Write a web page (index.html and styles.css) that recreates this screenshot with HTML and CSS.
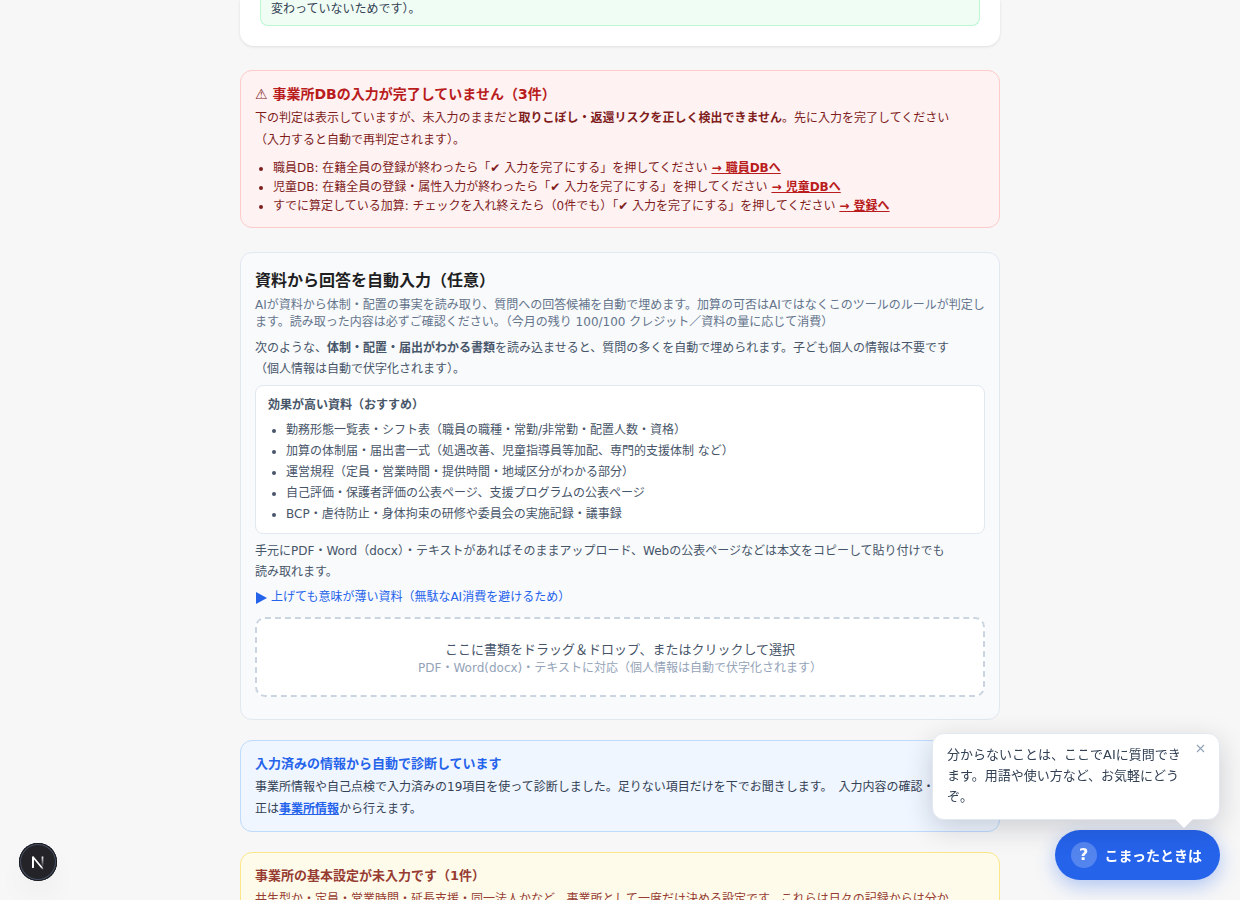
FILE: index.html
```html
<!DOCTYPE html>
<html lang="ja">
<head>
<meta charset="utf-8">
<meta name="viewport" content="width=device-width, initial-scale=1">
<title>加算診断</title>
<link rel="stylesheet" href="styles.css">
</head>
<body>
<main class="page">
  <section class="sheet">
    <p class="sheet-note">変わっていないためです）。</p>
  </section>

  <section class="card card-danger">
    <h2 class="danger-title"><span class="danger-icon">⚠</span> 事業所DBの入力が完了していません（3件）</h2>
    <p class="text">下の判定は表示していますが、未入力のままだと<strong>取りこぼし・返還リスクを正しく検出できません</strong>。先に入力を完了してください<br>（入力すると自動で再判定されます）。</p>
    <ul class="danger-list">
      <li>職員DB: 在籍全員の登録が終わったら「✔ 入力を完了にする」を押してください <a href="#staff">→ 職員DBへ</a></li>
      <li>児童DB: 在籍全員の登録・属性入力が終わったら「✔ 入力を完了にする」を押してください <a href="#children">→ 児童DBへ</a></li>
      <li>すでに算定している加算: チェックを入れ終えたら（0件でも）「✔ 入力を完了にする」を押してください <a href="#register">→ 登録へ</a></li>
    </ul>
  </section>

  <section class="card card-import">
    <h2 class="import-title">資料から回答を自動入力（任意）</h2>
    <p class="import-note">AIが資料から体制・配置の事実を読み取り、質問への回答候補を自動で埋めます。加算の可否はAIではなくこのツールのルールが判定します。読み取った内容は必ずご確認ください。（今月の残り 100/100 クレジット／資料の量に応じて消費）</p>
    <p class="import-text">次のような、<strong>体制・配置・届出がわかる書類</strong>を読み込ませると、質問の多くを自動で埋められます。子ども個人の情報は不要です<br>（個人情報は自動で伏字化されます）。</p>
    <div class="docs">
      <h3 class="docs-title">効果が高い資料（おすすめ）</h3>
      <ul class="docs-list">
        <li>勤務形態一覧表・シフト表（職員の職種・常勤/非常勤・配置人数・資格）</li>
        <li>加算の体制届・届出書一式（処遇改善、児童指導員等加配、専門的支援体制 など）</li>
        <li>運営規程（定員・営業時間・提供時間・地域区分がわかる部分）</li>
        <li>自己評価・保護者評価の公表ページ、支援プログラムの公表ページ</li>
        <li>BCP・虐待防止・身体拘束の研修や委員会の実施記録・議事録</li>
      </ul>
    </div>
    <p class="import-text">手元にPDF・Word（docx）・テキストがあればそのままアップロード、Webの公表ページなどは本文をコピーして貼り付けでも<br>読み取れます。</p>
    <details class="more">
      <summary>上げても意味が薄い資料（無駄なAI消費を避けるため）</summary>
    </details>
    <button type="button" class="dropzone">
      <span class="drop-title">ここに書類をドラッグ＆ドロップ、またはクリックして選択</span>
      <span class="drop-note">PDF・Word(docx)・テキストに対応（個人情報は自動で伏字化されます）</span>
    </button>
  </section>

  <section class="card card-info">
    <h2 class="box-title">入力済みの情報から自動で診断しています</h2>
    <p class="text">事業所情報や自己点検で入力済みの19項目を使って診断しました。足りない項目だけを下でお聞きします。　入力内容の確認・修<br>正は<a href="#office">事業所情報</a>から行えます。</p>
  </section>

  <section class="card card-warn">
    <h2 class="box-title">事業所の基本設定が未入力です（1件）</h2>
    <p class="text">共生型か・定員・営業時間・延長支援・同一法人かなど、事業所として一度だけ決める設定です。これらは日々の記録からは分か</p>
  </section>
</main>

<button type="button" class="dev-badge" aria-label="Next.js">
  <svg width="38" height="38" viewBox="0 0 38 38" aria-hidden="true">
    <defs>
      <linearGradient id="diag" x1="18" y1="19" x2="25" y2="27" gradientUnits="userSpaceOnUse">
        <stop offset="0" stop-color="#fff"/><stop offset=".6" stop-color="#fff"/><stop offset="1" stop-color="#fff" stop-opacity="0"/>
      </linearGradient>
      <linearGradient id="stem" x1="23" y1="13" x2="23" y2="24" gradientUnits="userSpaceOnUse">
        <stop offset="0" stop-color="#fff"/><stop offset="1" stop-color="#fff" stop-opacity="0"/>
      </linearGradient>
    </defs>
    <path d="M14 24.500V14L24 26" fill="none" stroke="url(#diag)" stroke-width="1.700" stroke-linejoin="bevel"/>
    <path d="M13.900 25V13.500" stroke="#fff" stroke-width="1.700"/>
    <path d="M23.500 13.500V24" stroke="url(#stem)" stroke-width="1.700"/>
  </svg>
</button>

<div class="help">
  <div class="bubble" role="status">
    <p class="bubble-text">分からないことは、ここでAIに質問できます。用語や使い方など、お気軽にどうぞ。</p>
    <button type="button" class="bubble-close" aria-label="閉じる">
      <svg width="9" height="9" viewBox="0 0 9 9" aria-hidden="true"><path d="M1 1l7 7M8 1L1 8" stroke="currentColor" stroke-width="1.200"/></svg>
    </button>
  </div>
  <button type="button" class="help-button"><span class="help-mark">?</span>こまったときは</button>
</div>
</body>
</html>
```
FILE: styles.css
```css
* { box-sizing: border-box; }

body {
  margin: 0;
  background: #f7f7f7;
  color: #1f2937;
  font-family: "DejaVu Sans", "Noto Sans CJK JP", sans-serif;
  font-size: 12px;
}

h2, h3, p, ul { margin: 0; }
ul { padding-left: 18px; }
button { font-family: inherit; cursor: pointer; }

.page {
  display: flow-root;
  max-width: 760px;
  height: 100vh;
  margin: 0 auto;
  overflow: clip;
  overflow-clip-margin: 4px;
}

.sheet {
  margin-bottom: 24px;
  padding: 0 20px 20px;
  border-radius: 0 0 14px 14px;
  background: #fff;
  box-shadow: 0 1px 3px rgba(0, 0, 0, .1);
}

.sheet-note {
  padding: 0 10px 7px;
  border: 1px solid #bbf7d0;
  border-top: 0;
  border-radius: 0 0 8px 8px;
  background: #f0fdf4;
  color: #334155;
  line-height: 18px;
}

.card {
  margin-bottom: 20px;
  padding: 12px 14px 11px;
  border: 1px solid;
  border-radius: 12px;
}

.text {
  margin-top: 1px;
  line-height: 22px;
}

.card-danger {
  margin-bottom: 24px;
  border-color: #fecaca;
  background: #fef2f2;
  color: #7f1d1d;
}

.danger-title {
  color: #b91c1c;
  font-size: 14px;
  line-height: 23px;
}

.danger-icon { color: #7f1d1d; }

.danger-list {
  margin-top: 8px;
  line-height: 19px;
}

.danger-list a {
  color: #b91c1c;
  font-weight: 700;
}

.card-import {
  padding: 15px 14px 22px;
  border-color: #e2e8f0;
  background: #f8fafc;
  color: #475569;
}

.import-title {
  color: #1f1f23;
  font-size: 16px;
  line-height: 26px;
}

.import-note {
  margin: 3px 0 7px;
  color: #64748b;
  line-height: 17px;
}

.import-text { line-height: 21px; }

.docs {
  margin: 5px 0 7px;
  padding: 9px 12px 8px;
  border: 1px solid #e2e8f0;
  border-radius: 8px;
  background: #fff;
  line-height: 21px;
}

.docs-title {
  margin-bottom: 4px;
  font-size: 12px;
}

.more {
  margin: 4px 0 9px;
  color: #2563eb;
  line-height: 21px;
}

.more summary {
  display: flex;
  align-items: center;
  gap: 4px;
  cursor: pointer;
}

.more summary::before {
  content: "";
  margin-left: 1px;
  border: 6px solid transparent;
  border-right: 0;
  border-left: 11px solid #2563eb;
}

.dropzone {
  display: flex;
  flex-direction: column;
  align-items: center;
  gap: 1px;
  width: 100%;
  padding: 21px 20px 18px;
  border: 2px dashed #cbd5e1;
  border-radius: 10px;
  background: #fff;
}

.drop-title {
  color: #475569;
  font-size: 13px;
  line-height: 19px;
}

.drop-note {
  color: #94a3b8;
  font-size: 12px;
  line-height: 17px;
}

.box-title {
  font-size: 13px;
  line-height: 22px;
}

.card-info {
  border-color: #bfdbfe;
  background: #eff6ff;
  color: #334155;
}

.card-info .box-title { color: #2563eb; }

.card-info a {
  color: #2563eb;
  font-weight: 700;
}

.card-warn {
  border-color: #fde68a;
  background: #fffbeb;
  color: #963c32;
}

.dev-badge {
  position: fixed;
  bottom: 19px;
  left: 19px;
  width: 38px;
  height: 38px;
  padding: 0;
  border: 0;
  border-radius: 50%;
  background: #242428;
  box-shadow: inset 0 0 0 1px #171717, inset 0 0 0 2px #475066, 0 16px 32px -8px rgba(0, 0, 0, .1);
}

.dev-badge svg { display: block; }

.help {
  position: fixed;
  right: 20px;
  bottom: 20px;
  display: flex;
  flex-direction: column;
  align-items: flex-end;
  gap: 10px;
}

.bubble {
  position: relative;
  width: 288px;
  padding: 10px 38px 12px 14px;
  border: 1px solid #e2e8f0;
  border-radius: 12px;
  background: #fff;
  box-shadow: 0 8px 28px rgba(15, 23, 42, .18);
}

.bubble::after {
  content: "";
  position: absolute;
  top: 100%;
  right: 26px;
  border: 9px solid transparent;
  border-top-color: #fff;
  border-bottom: 0;
}

.bubble-text {
  color: #334155;
  font-size: 13px;
  line-height: 21px;
}

.bubble-close {
  position: absolute;
  top: 3px;
  right: 8px;
  display: grid;
  place-items: center;
  width: 22px;
  height: 22px;
  padding: 0;
  border: 0;
  background: none;
  color: #94a3b8;
}

.help-button {
  display: flex;
  align-items: center;
  gap: 8px;
  padding: 12px 18px 12px 16px;
  border: 0;
  border-radius: 25px;
  background: #2563eb;
  box-shadow: 0 6px 20px rgba(37, 99, 235, .35);
  color: #fff;
  font-size: 14px;
  font-weight: 700;
}

.help-mark {
  width: 26px;
  border-radius: 50%;
  background: rgba(255, 255, 255, .22);
  font-size: 16px;
  line-height: 26px;
}
```
